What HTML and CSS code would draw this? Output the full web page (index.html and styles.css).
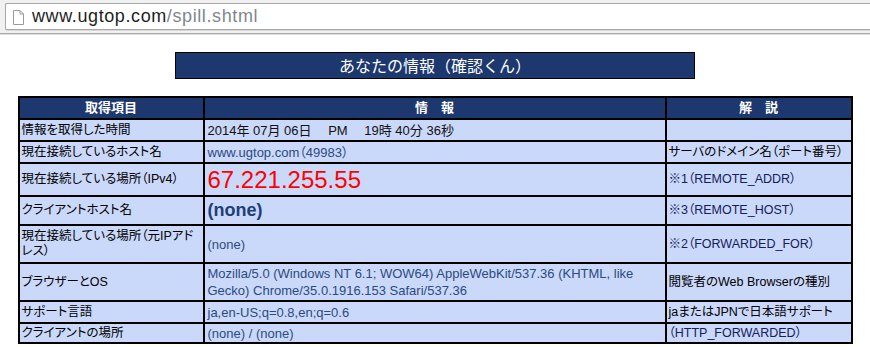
FILE: index.html
```html
<!DOCTYPE html>
<html lang="ja">
<head>
<meta charset="utf-8">
<title>あなたの情報(確認くん)</title>
<link rel="stylesheet" href="styles.css">
</head>
<body>
<div class="toolbar">
  <div class="omnibox">
    <svg class="page-icon" width="11" height="15" viewBox="0 0 11 15">
      <path d="M0.5 0.5 H7 L10.5 4 V14.5 H0.5 Z" fill="#fff" stroke="#9a9a9a"/>
      <path d="M7 0.5 V4 H10.5" fill="none" stroke="#9a9a9a"/>
    </svg>
    <span class="url-host">www.ugtop.com</span><span class="url-path">/spill.shtml</span>
  </div>
</div>
<div class="page">
  <div class="title">あなたの情報（確認くん）</div>
  <table class="info">
    <colgroup>
      <col class="c1"><col class="c2"><col class="c3">
    </colgroup>
    <thead>
      <tr class="h-row">
        <th>取得項目</th>
        <th>情　報</th>
        <th>解　説</th>
      </tr>
    </thead>
    <tbody>
      <tr class="r20">
        <td class="label">情報を取得した時間</td>
        <td class="val date">2014年 07月 06日　 PM　 19時 40分 36秒</td>
        <td class="note"></td>
      </tr>
      <tr class="r20">
        <td class="label">現在接続しているホスト名</td>
        <td class="val">www.ugtop.com（49983）</td>
        <td class="note">サーバのドメイン名（ポート番号）</td>
      </tr>
      <tr class="r31">
        <td class="label">現在接続している場所（IPv4）</td>
        <td class="val ip">67.221.255.55</td>
        <td class="note navy">※1（REMOTE_ADDR）</td>
      </tr>
      <tr class="r27">
        <td class="label">クライアントホスト名</td>
        <td class="val bold">(none)</td>
        <td class="note navy">※3（REMOTE_HOST）</td>
      </tr>
      <tr class="r36">
        <td class="label">現在接続している場所（元IPアドレス）</td>
        <td class="val">(none)</td>
        <td class="note navy">※2（FORWARDED_FOR）</td>
      </tr>
      <tr class="r36">
        <td class="label">ブラウザーとOS</td>
        <td class="val">Mozilla/5.0 (Windows NT 6.1; WOW64) AppleWebKit/537.36 (KHTML, like Gecko) Chrome/35.0.1916.153 Safari/537.36</td>
        <td class="note">閲覧者のWeb Browserの種別</td>
      </tr>
      <tr class="r20">
        <td class="label">サポート言語</td>
        <td class="val">ja,en-US;q=0.8,en;q=0.6</td>
        <td class="note">jaまたはJPNで日本語サポート</td>
      </tr>
      <tr class="r19">
        <td class="label">クライアントの場所</td>
        <td class="val">(none) / (none)</td>
        <td class="note navy">（HTTP_FORWARDED）</td>
      </tr>
    </tbody>
  </table>
</div>
</body>
</html>
```

FILE: styles.css
```css
html, body {
  margin: 0;
  padding: 0;
  background: #fff;
}

body {
  font-family: "Liberation Sans", "Noto Sans CJK JP", Arial, sans-serif;
  font-feature-settings: "palt";
  width: 870px;
  overflow: hidden;
}

.toolbar {
  height: 30px;
  padding-top: 3px;
  box-sizing: content-box;
  background: #f1f1f1;
  border-bottom: 1px solid #a9a9a9;
  box-shadow: 0 1px 0 #e2e2e2;
  padding-left: 5px;
  display: flex;
  align-items: flex-start;
}

.omnibox {
  flex: 1;
  height: 25px;
  background: #fff;
  border: 1px solid #a7a7a7;
  border-right: none;
  border-radius: 2px 0 0 2px;
  display: flex;
  align-items: center;
  padding-left: 7px;
  box-shadow: 0 1px 0 #d8d8d8;
}

.page-icon {
  display: block;
  margin-right: 8px;
  margin-top: 1px;
}

.url-host {
  font-size: 18px;
  color: #1e1e1e;
  line-height: 25px;
  letter-spacing: 0.6px;
}

.url-path {
  font-size: 18px;
  color: #7f8690;
  line-height: 25px;
  letter-spacing: 0.6px;
}

.page {
  display: flex;
  flex-direction: column;
  align-items: center;
  padding-top: 18px;
}

.title {
  width: 518px;
  height: 25px;
  border: 1px solid #000;
  background: #1d386e;
  color: #fff;
  font-size: 16px;
  line-height: 25px;
  text-align: center;
  font-family: "Noto Sans CJK JP", "Liberation Sans", sans-serif;
  font-feature-settings: normal;
}

.info {
  margin-top: 17px;
  width: 835px;
  border-collapse: separate;
  border-spacing: 2px;
  background: #000;
  table-layout: fixed;
}

.c1 { width: 183px; }
.c2 { width: 460px; }
.c3 { width: 184px; }

.info th,
.info td {
  padding: 0 0 0 2px;
  vertical-align: middle;
  overflow: hidden;
}

.info th {
  background: #1d386e;
  color: #fff;
  font-size: 13px;
  font-weight: bold;
  text-align: center;
  height: 20px;
  line-height: 16px;
  padding: 0;
  font-feature-settings: normal;
}

.info td {
  background: #cad8f9;
  font-size: 12px;
  line-height: 15px;
}

.r20 td { height: 20px; }
.r19 td { height: 18px; }
.r31 td { height: 31px; }
.r27 td { height: 27px; }
.r36 td { height: 36px; }

.label {
  color: #000;
  font-size: 12.5px !important;
}

.val {
  color: #2c4a82;
  font-size: 13px !important;
  line-height: 17px !important;
  padding-left: 3px !important;
}

.val.date {
  color: #111;
}

.val.ip {
  color: #ff0000;
  font-size: 24px !important;
  line-height: 28px !important;
}

.val.bold {
  font-size: 18px !important;
  font-weight: bold;
  color: #1e3f78;
}

.note {
  color: #000;
  font-size: 12.5px !important;
}

.note.navy {
  color: #14205a;
}
```
